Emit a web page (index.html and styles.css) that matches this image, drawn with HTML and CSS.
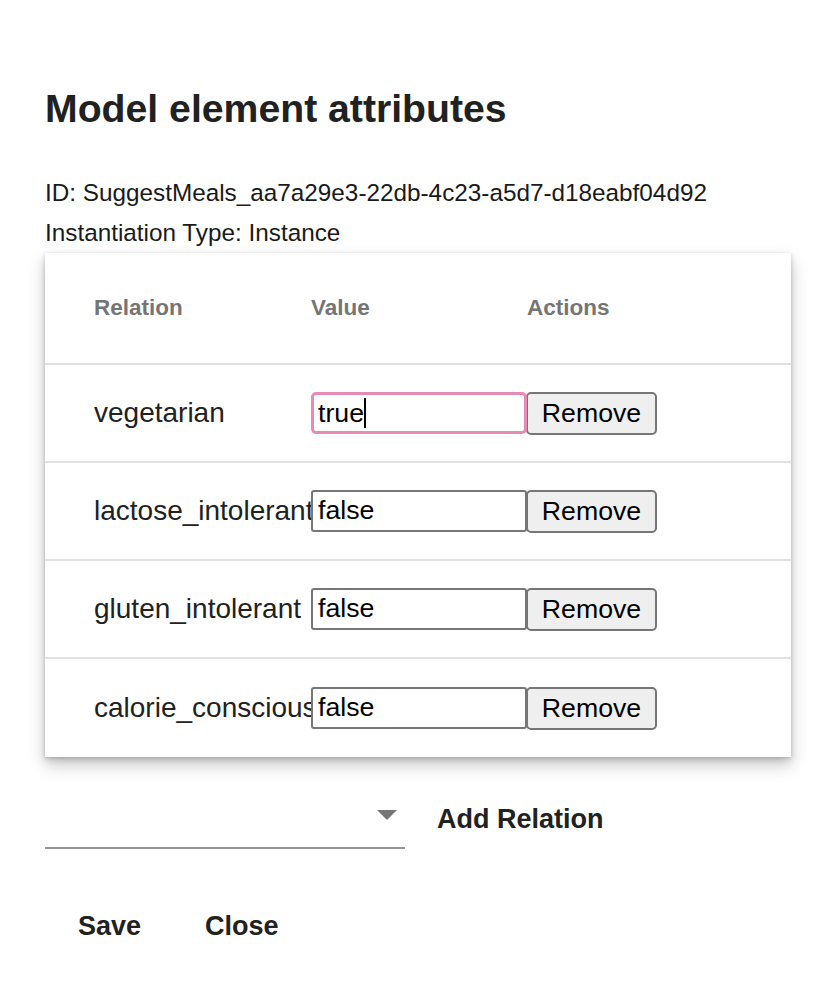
FILE: index.html
```html
<!DOCTYPE html>
<html lang="en">
<head>
<meta charset="utf-8">
<title>Model element attributes</title>
<link rel="stylesheet" href="styles.css">
</head>
<body>
<div class="dialog">
  <h2 class="title">Model element attributes</h2>
  <p class="meta">ID: SuggestMeals_aa7a29e3-22db-4c23-a5d7-d18eabf04d92</p>
  <p class="meta">Instantiation Type: Instance</p>

  <div class="paper">
    <div class="row head">
      <div class="cell first">Relation</div>
      <div class="cell">Value</div>
      <div class="cell">Actions</div>
    </div>
    <div class="row">
      <div class="cell first name">vegetarian</div>
      <div class="cell"><div class="field focused">true<span class="caret"></span></div></div>
      <div class="cell"><button class="remove" type="button">Remove</button></div>
    </div>
    <div class="row">
      <div class="cell first name">lactose_intolerant</div>
      <div class="cell"><div class="field">false</div></div>
      <div class="cell"><button class="remove" type="button">Remove</button></div>
    </div>
    <div class="row">
      <div class="cell first name">gluten_intolerant</div>
      <div class="cell"><div class="field">false</div></div>
      <div class="cell"><button class="remove" type="button">Remove</button></div>
    </div>
    <div class="row last">
      <div class="cell first name">calorie_conscious</div>
      <div class="cell"><div class="field">false</div></div>
      <div class="cell"><button class="remove" type="button">Remove</button></div>
    </div>
  </div>

  <div class="add">
    <div class="select">
      <span class="arrow"></span>
    </div>
    <button class="text-btn add-btn" type="button">Add Relation</button>
  </div>

  <div class="actions">
    <button class="text-btn" type="button">Save</button>
    <button class="text-btn" type="button">Close</button>
  </div>
</div>
</body>
</html>
```

FILE: styles.css
```css
html, body {
  margin: 0;
  padding: 0;
  background: #ffffff;
}

body {
  font-family: "Liberation Sans", Arial, Helvetica, sans-serif;
  color: #212121;
}

.dialog {
  padding: 85px 0 0 45px;
  width: 746px;
}

.title {
  margin: 0;
  font-size: 39.2px;
  line-height: 48px;
  font-weight: bold;
  color: #212121;
}

.meta {
  margin: 0;
  font-size: 24.3px;
  line-height: 40px;
  color: #1a1a1a;
}

.title + .meta {
  margin-top: 40px;
}

.paper {
  margin-top: 2px;
  background: #ffffff;
  box-shadow: 0 1px 3px rgba(0, 0, 0, 0.12), 0 8px 16px rgba(0, 0, 0, 0.22), 0 3px 6px rgba(0, 0, 0, 0.12);
  position: relative;
  top: -2px;
}

.row {
  display: grid;
  grid-template-columns: 266px 216px 1fr;
  align-items: center;
  height: 96px;
  border-bottom: 2px solid #e0e0e0;
}

.row.head {
  height: 110px;
}

.row.last {
  border-bottom: none;
  height: 98px;
}

.cell {
  white-space: nowrap;
  min-width: 0;
}

.cell.first {
  padding-left: 49px;
}

.head .cell {
  font-size: 22.5px;
  font-weight: bold;
  color: #757575;
}

.name {
  font-size: 28px;
  color: #212121;
}

.field {
  box-sizing: border-box;
  width: 216px;
  height: 42px;
  border: 2px solid #767676;
  border-radius: 3px;
  padding: 0 5px;
  font-size: 26.7px;
  line-height: 37px;
  color: #000000;
  background: #ffffff;
  position: relative;
}

.field.focused {
  border: 3px solid #e98ab6;
  border-radius: 5px;
  padding: 0 4px;
  line-height: 36px;
}

.caret {
  display: inline-block;
  width: 2px;
  height: 30px;
  background: #000000;
  vertical-align: -6px;
}

.remove {
  box-sizing: border-box;
  width: 131px;
  height: 43px;
  margin-left: -1px;
  border: 2px solid #767676;
  border-radius: 5px;
  background: #efefef;
  font-family: "Liberation Sans", Arial, sans-serif;
  font-size: 26.7px;
  color: #000000;
  padding: 0;
}

.add {
  display: flex;
  align-items: flex-end;
  gap: 16px;
  margin-top: 28px;
}

.select {
  width: 360px;
  height: 60px;
  border-bottom: 2px solid #949494;
  display: flex;
  justify-content: flex-end;
  align-items: center;
}

.arrow {
  width: 0;
  height: 0;
  border-left: 10px solid transparent;
  border-right: 10px solid transparent;
  border-top: 10px solid #757575;
  margin-right: 8px;
  margin-top: -4px;
}

.text-btn {
  background: none;
  border: none;
  font-family: "Liberation Sans", Arial, sans-serif;
  font-size: 27px;
  font-weight: bold;
  color: #212121;
  padding: 12px 16px;
  line-height: 32px;
}

.add-btn {
  align-self: flex-start;
  margin-top: 4px;
}

.actions {
  display: flex;
  gap: 32px;
  margin-top: 49px;
  padding-left: 17px;
}
```
